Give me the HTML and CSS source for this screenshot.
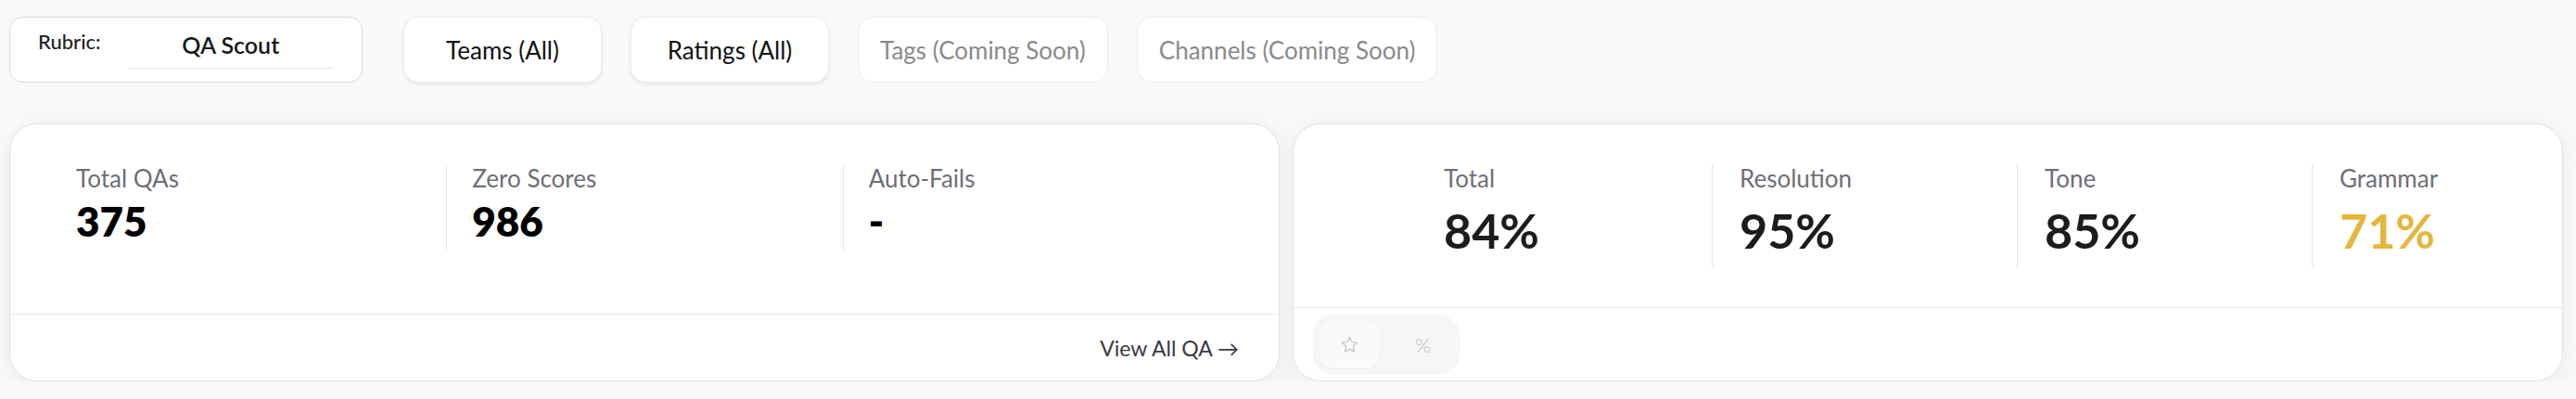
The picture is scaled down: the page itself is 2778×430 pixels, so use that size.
FILE: index.html
```html
<!DOCTYPE html>
<html lang="en">
<head>
    <meta charset="UTF-8">
    <meta name="viewport" content="width=device-width, initial-scale=1.0">
    <title>QA Overview</title>
    <link rel="stylesheet" href="styles.css">
</head>
<body>
    <div class="page">
        <div class="filters">
            <div class="rubric">
                <span class="rubric-label">Rubric:</span>
                <div class="rubric-select">QA Scout</div>
            </div>
            <button class="filter">Teams (All)</button>
            <button class="filter">Ratings (All)</button>
            <button class="filter soon">Tags (Coming Soon)</button>
            <button class="filter soon">Channels (Coming Soon)</button>
        </div>

        <div class="cards">
            <div class="card">
                <div class="card-main">
                    <div class="counts">
                        <div class="stat">
                            <div class="stat-label">Total QAs</div>
                            <div class="stat-value">375</div>
                        </div>
                        <div class="stat">
                            <div class="stat-label">Zero Scores</div>
                            <div class="stat-value">986</div>
                        </div>
                        <div class="stat">
                            <div class="stat-label">Auto-Fails</div>
                            <div class="stat-value">-</div>
                        </div>
                    </div>
                </div>
                <div class="card-foot foot-link">
                    <a href="#" class="view-all">View All QA &rarr;</a>
                </div>
            </div>

            <div class="card">
                <div class="card-main">
                    <div class="scores">
                        <div class="stat">
                            <div class="stat-label">Total</div>
                            <div class="score-value">84%</div>
                        </div>
                        <div class="stat">
                            <div class="stat-label">Resolution</div>
                            <div class="score-value">95%</div>
                        </div>
                        <div class="stat">
                            <div class="stat-label">Tone</div>
                            <div class="score-value">85%</div>
                        </div>
                        <div class="stat">
                            <div class="stat-label">Grammar</div>
                            <div class="score-value warn">71%</div>
                        </div>
                    </div>
                </div>
                <div class="card-foot">
                    <div class="toggle">
                        <button class="toggle-btn active">
                            <svg width="21" height="21" viewBox="0 0 24 24" fill="none" stroke="#c9c9c9" stroke-width="1.6" stroke-linejoin="round">
                                <path d="M12 2.8l2.8 5.9 6.4.8-4.7 4.4 1.2 6.4L12 17.2l-5.7 3.1 1.2-6.4L2.8 9.5l6.4-.8z"/>
                            </svg>
                        </button>
                        <button class="toggle-btn">%</button>
                    </div>
                </div>
            </div>
        </div>
    </div>
</body>
</html>
```

FILE: styles.css
```css
*{
    box-sizing: border-box;
}
body{
    margin: 0;
    background-color: #f9f9f9;
    font-family: Lato, "Noto Sans", sans-serif;
    color: #111;
}
.page{
    padding: 18px 14px 0 10px;
}
.filters{
    display: flex;
    gap: 31px;
    height: 71px;
    margin-bottom: 44px;
}
.rubric{
    width: 381px;
    display: flex;
    align-items: flex-start;
    padding: 0 30px;
    margin-right: 13px;
    background-color: white;
    border: 1px solid #dcdcdc;
    border-radius: 14px;
}
.rubric-label{
    margin-top: 13px;
    font-size: 22px;
    font-weight: 500;
    line-height: 26px;
    color: #1d1d1f;
}
.rubric-select{
    flex: 1;
    margin: 14px 0 0 29px;
    padding-bottom: 10px;
    border-bottom: 1px solid #e6e6e6;
    text-align: center;
    font-size: 25px;
    font-weight: 600;
    line-height: 30px;
    color: #17181a;
}
.filter{
    width: 214px;
    padding: 0;
    font-family: inherit;
    font-size: 26px;
    color: #111;
    background-color: white;
    border: 1px solid #ececec;
    border-radius: 16px;
    box-shadow: 0 2px 4px rgba(0, 0, 0, 0.08);
    cursor: pointer;
}
.filter.soon{
    width: auto;
    padding: 0 23px;
    color: #8a8a8a;
    box-shadow: none;
    cursor: default;
}
.cards{
    display: grid;
    grid-template-columns: 1fr 1fr;
    gap: 14px;
}
.card{
    display: flex;
    flex-direction: column;
    height: 278px;
    background-color: white;
    border: 1px solid #e3e3e3;
    border-radius: 30px;
    box-shadow: 0 4px 26px rgba(0, 0, 0, 0.06);
}
.card-main{
    flex: 1;
    padding-top: 43px;
}
.counts{
    display: grid;
    grid-template-columns: repeat(3, 1fr);
    padding: 0 43px;
}
.scores{
    display: grid;
    grid-template-columns: 319px 329px 318px 1fr;
    padding-left: 132px;
}
.stat{
    padding-left: 29px;
    border-left: 1px solid #e8e8e8;
}
.counts .stat{
    padding-left: 27px;
    padding-bottom: 7px;
}
.scores .stat{
    padding-bottom: 9px;
}
.stat:first-child{
    border-left: 1px solid transparent;
}
.stat-label{
    font-size: 26px;
    line-height: 31px;
    color: #6e6e78;
}
.stat-value{
    margin-top: 5px;
    font-size: 44px;
    font-weight: 800;
    line-height: 51px;
    color: black;
}
.score-value{
    margin-top: 9px;
    font-size: 52px;
    font-weight: 700;
    line-height: 62px;
    color: #1b1c1e;
}
.score-value.warn{
    color: #e4b63f;
}
.card-foot{
    display: flex;
    align-items: center;
    height: 79px;
    padding: 7px 21px 6px;
    border-top: 1px solid #e6e6e6;
}
.foot-link{
    height: 72px;
    justify-content: flex-end;
    padding: 0 43px 0 0;
}
.view-all{
    font-size: 23px;
    color: #3a3a44;
    text-decoration: none;
}
.toggle{
    display: flex;
    gap: 14px;
    height: 65px;
    padding: 7px;
    background-color: #f6f6f6;
    border-radius: 22px;
}
.toggle-btn{
    width: 65px;
    display: flex;
    align-items: center;
    justify-content: center;
    font-family: inherit;
    font-size: 22px;
    color: #d3d3d3;
    background: none;
    border: none;
    border-radius: 14px;
}
.toggle-btn.active{
    background-color: #fafafa;
    box-shadow: 0 1px 2px rgba(0, 0, 0, 0.04);
}
```
